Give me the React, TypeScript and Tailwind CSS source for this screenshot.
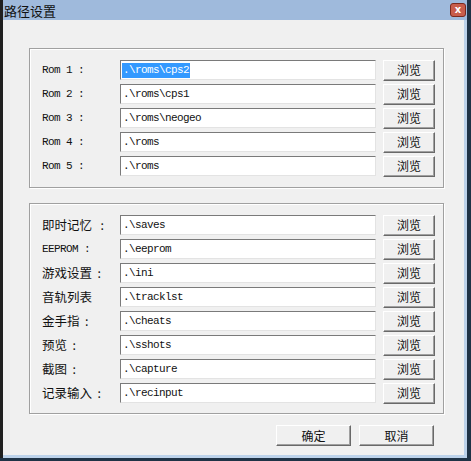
const romRows = [
  { label: 'Rom 1 :', value: '.\\roms\\cps2', selected: true },
  { label: 'Rom 2 :', value: '.\\roms\\cps1' },
  { label: 'Rom 3 :', value: '.\\roms\\neogeo' },
  { label: 'Rom 4 :', value: '.\\roms' },
  { label: 'Rom 5 :', value: '.\\roms' },
];

const pathRows = [
  { label: '即时记忆   :', value: '.\\saves' },
  { label: 'EEPROM :', value: '.\\eeprom', mono: true },
  { label: '游戏设置  :', value: '.\\ini' },
  { label: '音轨列表', value: '.\\tracklst' },
  { label: '金手指  :', value: '.\\cheats' },
  { label: '预览  :', value: '.\\sshots' },
  { label: '截图  :', value: '.\\capture' },
  { label: '记录输入  :', value: '.\\recinput' },
];

const mono = "font-['SimSun','Liberation_Mono',monospace] text-[11px] tracking-[-0.6px]";
const cjk = "font-['Noto_Sans_CJK_SC','Liberation_Sans',sans-serif] text-[12px]";

type RowProps = {
  label: string;
  value: string;
  selected?: boolean;
  mono?: boolean;
  cjkLabel?: boolean;
};

const Button = ({ children, className }: { children: React.ReactNode; className: string }) => (
  <div
    className={`flex items-center justify-center bg-[#f0f0f0] text-[#111] border border-t-white border-l-white border-r-[#696969] border-b-[#696969] shadow-[inset_-1px_-1px_0_#a0a0a0] ${cjk} ${className}`}
  >
    {children}
  </div>
);

const PathRow = ({ label, value, selected, mono: monoLabel, cjkLabel }: RowProps) => (
  <div className="flex h-[20px] items-center">
    <div
      className={`w-[78px] shrink-0 text-[#111] whitespace-pre ${cjkLabel && !monoLabel ? "font-['Noto_Sans_CJK_SC',sans-serif] text-[12.5px]" : mono}`}
    >
      {label}
    </div>
    <div className="flex h-[20px] w-[256px] items-center bg-white border border-t-[#7a7a7a] border-l-[#7a7a7a] border-r-[#e3e3e3] border-b-[#e3e3e3] pl-[1px]">
      <span
        className={`${mono} leading-[15px] px-[1px] ${selected ? 'bg-[#3399ff] text-white' : 'text-[#111]'}`}
      >
        {value}
      </span>
    </div>
    <Button className="ml-[7px] h-[21px] w-[52px]">浏览</Button>
  </div>
);

const GroupBox = ({ children, className }: { children: React.ReactNode; className: string }) => (
  <div
    className={`w-[415px] border border-[#a0a0a0] shadow-[inset_1px_1px_0_#ffffff,1px_1px_0_#ffffff] pl-[12px] flex flex-col gap-[4px] ${className}`}
  >
    {children}
  </div>
);

export default function App() {
  return (
    <div className="relative h-[461px] w-[471px] bg-[#1f3346] overflow-hidden">
      <div className="flex h-[458px] w-[467px] flex-col bg-[#bcd2ea] border-l-[3px] border-l-[#202020]">
        <div className="flex h-[20px] shrink-0 items-center justify-between bg-[#9fbadc] pl-[1px] pr-[1px]">
          <span className="font-['Noto_Sans_CJK_SC',sans-serif] text-[13px] leading-none text-[#111]">
            路径设置
          </span>
          <div className="flex h-[14px] w-[16px] items-center justify-center rounded-[3px] border border-[#7a2a1e] bg-[#c95d4b]">
            <span className="font-['DejaVu_Sans',sans-serif] text-[10px] font-bold leading-none text-white">x</span>
          </div>
        </div>
        <div className="mr-[3px] flex h-[435px] flex-col bg-[#f0f0f0] pl-[26px] pt-[28px]">
          <GroupBox className="py-[11px]">
            {romRows.map((r) => (
              <PathRow key={r.label} {...r} />
            ))}
          </GroupBox>
          <GroupBox className="mt-[15px] pt-[11px] pb-[10px]">
            {pathRows.map((r) => (
              <PathRow key={r.label} {...r} cjkLabel />
            ))}
          </GroupBox>
          <div className="mt-[11px] flex w-[405px] justify-end gap-[8px]">
            <Button className="h-[21px] w-[75px]">确定</Button>
            <Button className="h-[21px] w-[75px]">取消</Button>
          </div>
        </div>
      </div>
    </div>
  );
}
